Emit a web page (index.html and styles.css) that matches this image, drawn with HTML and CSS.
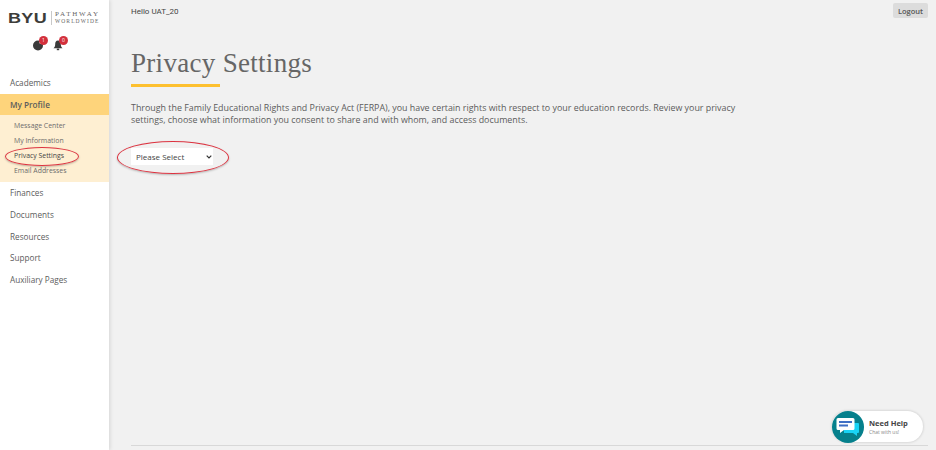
FILE: index.html
```html
<!DOCTYPE html>
<html lang="en">
<head>
    <meta charset="UTF-8">
    <title>Privacy Settings</title>
    <link rel="stylesheet" href="styles.css">
</head>
<body>
    <aside class="sidebar">
        <div class="logo">
            <span class="logo-byu">BYU</span>
            <span class="logo-name"><span>PATHWAY</span><span class="logo-small">WORLDWIDE</span></span>
        </div>
        <div class="alerts">
            <span class="alert">
                <svg width="12" height="12" viewBox="0 0 12 12"><circle cx="6" cy="6.500" r="5" fill="#3a3a3a"/><circle cx="9" cy="3.500" r="1.600" fill="#fff"/></svg>
                <span class="badge">1</span>
            </span>
            <span class="alert">
                <svg width="12" height="12" viewBox="0 0 12 12"><path d="M6 1.500C3.800 1.500 3.200 3.400 3.200 5.200c0 2-.7 3-1.700 4h9c-1-1-1.700-2-1.700-4C8.800 3.400 8.200 1.500 6 1.500z" fill="#3a3a3a"/><rect x="4.800" y="9.600" width="2.400" height="1.600" fill="#3a3a3a"/></svg>
                <span class="badge">0</span>
            </span>
        </div>
        <ul class="nav">
            <li><a href="#">Academics</a></li>
            <li class="active">
                <a href="#">My Profile</a>
                <ul class="subnav">
                    <li><a href="#">Message Center</a></li>
                    <li><a href="#">My Information</a></li>
                    <li class="circled"><a href="#">Privacy Settings</a></li>
                    <li><a href="#">Email Addresses</a></li>
                </ul>
            </li>
            <li><a href="#">Finances</a></li>
            <li><a href="#">Documents</a></li>
            <li><a href="#">Resources</a></li>
            <li><a href="#">Support</a></li>
            <li><a href="#">Auxiliary Pages</a></li>
        </ul>
    </aside>

    <main class="content">
        <div class="topbar">
            <span class="hello">Hello UAT_20</span>
            <button class="logout">Logout</button>
        </div>
        <h1 class="title">Privacy Settings</h1>
        <p class="intro">Through the Family Educational Rights and Privacy Act (FERPA), you have certain rights with respect to your education records. Review your privacy settings, choose what information you consent to share and with whom, and access documents.</p>
        <div class="select-wrap">
            <select class="select">
                <option>Please Select</option>
            </select>
            <svg class="chevron" width="6" height="4" viewBox="0 0 6 4"><path d="M.7.7 3 3l2.300-2.300" fill="none" stroke="#333" stroke-width="1.200"/></svg>
        </div>
        <div class="spacer"></div>
        <div class="footer-line"></div>
    </main>

    <div class="help">
        <span class="help-icon">
            <svg width="24" height="20" viewBox="0 0 24 20">
                <path d="M8 6h14a1 1 0 0 1 1 1v8a1 1 0 0 1-1 1h-1v3l-4-3H8z" fill="#19d3f5"/>
                <path d="M2 1h15a1.500 1.500 0 0 1 1.500 1.500v9a1.500 1.500 0 0 1-1.500 1.500H8l-4 3v-3H2a1.500 1.500 0 0 1-1.500-1.500v-9A1.500 1.500 0 0 1 2 1z" fill="#fff"/>
                <rect x="3" y="4" width="13" height="2" fill="#3f6fc4"/>
                <rect x="3" y="7.500" width="9" height="2" fill="#3f6fc4"/>
            </svg>
        </span>
        <span class="help-text">
            <strong>Need Help</strong>
            <small>Chat with us!</small>
        </span>
    </div>
</body>
</html>
```

FILE: styles.css
```css
* {
    margin: 0;
    padding: 0;
    box-sizing: border-box;
}

html, body {
    height: 100%;
}

body {
    display: flex;
    height: 450px;
    overflow: hidden;
    background-color: #f1f1f1;
    color: #555;
    font-family: 'Open Sans', sans-serif;
}

/* Sidebar */
.sidebar {
    width: 109px;
    flex-shrink: 0;
    background-color: white;
    box-shadow: 1px 0 4px rgba(0, 0, 0, 0.12);
}

.logo {
    display: flex;
    align-items: center;
    padding: 11px 0 0 8px;
    height: 25px;
}

.logo-byu {
    width: 43px;
    font-family: 'Liberation Sans', sans-serif;
    font-weight: 700;
    font-size: 15px;
    line-height: 14px;
    letter-spacing: 0.3px;
    color: #3d3d3a;
    transform: scaleX(1.2);
    transform-origin: left;
}

.logo-name {
    display: flex;
    flex-direction: column;
    border-left: 1px solid #c9c9c9;
    padding-left: 3px;
    font-family: 'Liberation Serif', serif;
    font-size: 7px;
    line-height: 7px;
    letter-spacing: 1.800px;
    color: #666;
}

.logo-small {
    font-size: 5.500px;
    letter-spacing: 1.100px;
}

.alerts {
    display: flex;
    gap: 8px;
    margin-top: 13px;
    padding-left: 32px;
    height: 13px;
}

.alert {
    position: relative;
    display: block;
    width: 12px;
    height: 12px;
    margin-top: 1px;
}

.alert svg {
    display: block;
}

.badge {
    position: absolute;
    top: -3px;
    right: -4px;
    width: 9px;
    height: 9px;
    border-radius: 50%;
    background-color: #d3303c;
    color: white;
    font-size: 5px;
    line-height: 9px;
    text-align: center;
}

.nav {
    list-style: none;
    margin-top: 21px;
}

.nav a {
    display: block;
    height: 21.700px;
    padding-left: 10px;
    font-size: 8.200px;
    line-height: 21.700px;
    color: #5c5c5c;
    text-decoration: none;
}

.nav .active > a {
    background-color: #fed47b;
    font-weight: 600;
}

.subnav {
    list-style: none;
    height: 67px;
    padding: 3px 0 0 0;
    background-color: #feefd2;
}

.nav .subnav a {
    height: 15px;
    padding-left: 14px;
    font-size: 6.900px;
    line-height: 15px;
    color: #6c6c6c;
}

.nav .subnav .circled a {
    color: #444;
}

.circled {
    position: relative;
}

/* hand drawn red ovals from the annotated screenshot */
.circled::after {
    content: "";
    position: absolute;
    left: 5px;
    top: -1px;
    width: 72px;
    height: 17px;
    border: 1px solid #dc3340;
    border-radius: 50%;
    box-shadow: 0 1px 2px rgba(0, 0, 0, 0.25);
}

/* Main content */
.content {
    flex: 1;
    display: flex;
    flex-direction: column;
    padding: 0 8px 0 22px;
}

.topbar {
    display: flex;
    justify-content: space-between;
    align-items: flex-start;
    height: 18px;
    padding-top: 3px;
}

.hello {
    padding-top: 2px;
    font-family: 'Roboto', sans-serif;
    font-size: 8px;
    line-height: 14px;
    color: #444;
}

.logout {
    width: 35px;
    height: 15px;
    border: none;
    border-radius: 2px;
    background-color: #dcdcdc;
    color: #555;
    font-family: 'Open Sans', sans-serif;
    font-size: 7.500px;
    font-weight: 600;
}

.title {
    width: 89px;
    margin-top: 30px;
    padding-bottom: 6px;
    border-bottom: 3px solid #fdc02f;
    font-family: 'Liberation Serif', serif;
    font-size: 27px;
    font-weight: 400;
    line-height: 30px;
    letter-spacing: 0.3px;
    white-space: nowrap;
    color: #666;
}

.intro {
    width: 610px;
    margin-top: 15px;
    font-size: 8.900px;
    line-height: 12px;
    color: #5c5c5c;
}

.select-wrap {
    position: relative;
    width: 82px;
    margin-top: 22px;
}

.select-wrap::after {
    content: "";
    position: absolute;
    left: -14px;
    top: -7px;
    width: 110px;
    height: 31px;
    border: 1px solid #dc3340;
    border-radius: 50%;
    box-shadow: 0 1px 2px rgba(0, 0, 0, 0.25);
    pointer-events: none;
}

.select {
    display: block;
    appearance: none;
    width: 82px;
    height: 17px;
    padding-left: 5px;
    border: none;
    background-color: white;
    color: #444;
    font-family: 'Open Sans', sans-serif;
    font-size: 8px;
}

.chevron {
    position: absolute;
    left: 75px;
    top: 7px;
}

.spacer {
    flex: 1;
}

.footer-line {
    height: 5px;
    border-top: 1px solid #d8d8d8;
}

/* Chat widget */
.help {
    position: absolute;
    left: 832px;
    top: 411px;
    display: flex;
    align-items: center;
    gap: 5px;
    width: 91px;
    height: 31px;
    border-radius: 16px;
    background-color: white;
    box-shadow: 0 0 3px rgba(0, 0, 0, 0.2);
}

.help-icon {
    display: flex;
    align-items: center;
    justify-content: center;
    width: 32px;
    height: 32px;
    border-radius: 50%;
    background-color: #06808c;
}

.help-text {
    display: flex;
    flex-direction: column;
}

.help-text strong {
    font-size: 7.500px;
    line-height: 10px;
    color: #444;
}

.help-text small {
    font-size: 5px;
    line-height: 8px;
    color: #888;
}
```
